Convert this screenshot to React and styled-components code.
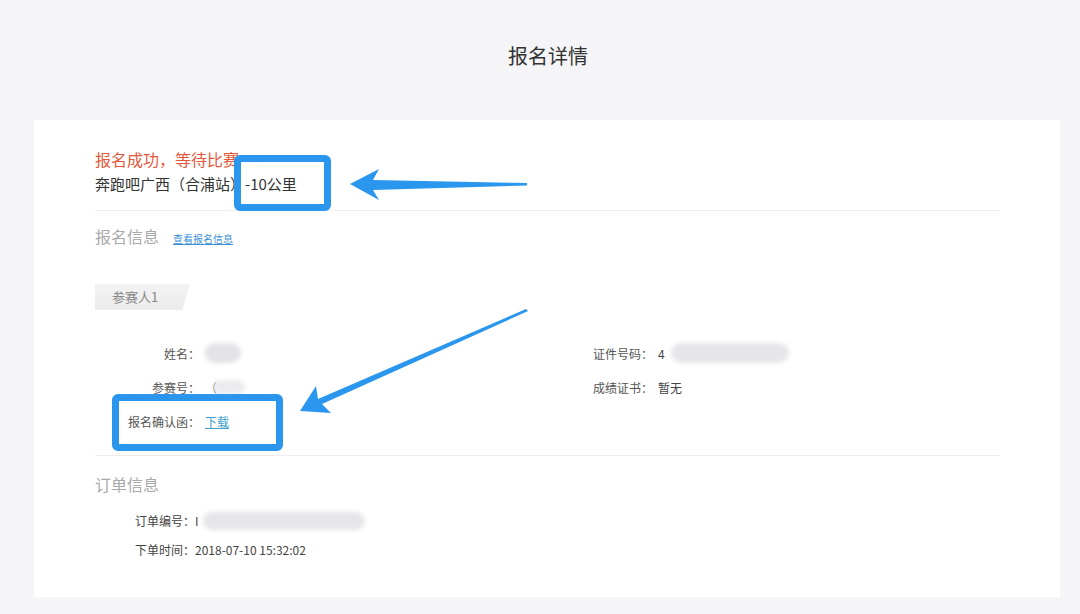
import React from "react";
import styled, { createGlobalStyle } from "styled-components";

const GlobalStyle = createGlobalStyle`
  html, body {
    margin: 0;
    padding: 0;
    background: #f5f5f7;
    font-family: "Noto Sans CJK SC", "Noto Sans", "Liberation Sans", sans-serif;
  }
`;

const PageStyled = styled.div`
  position: relative;
  width: 1080px;
  height: 614px;
  overflow: hidden;
  background: #f5f5f7;
`;

const HeaderStyled = styled.header`
  height: 120px;
  box-sizing: border-box;
  padding-top: 42px;
  text-align: center;
  font-size: 20px;
  line-height: 28px;
  color: #333;
  padding-left: 16px;
`;

const CardStyled = styled.section`
  margin-left: 34px;
  width: 1026px;
  box-sizing: border-box;
  padding: 28px 60px 33px 61px;
  background: #fff;
`;

const StatusStyled = styled.div`
  font-size: 16px;
  line-height: 22px;
  color: #e5573a;
`;

const CourseStyled = styled.div`
  margin-top: 3px;
  font-size: 15px;
  line-height: 22px;
  color: #333;
`;

const DividerStyled = styled.hr`
  border: 0;
  height: 0;
  margin: ${({ $top }) => $top}px 0 0 0;
  border-bottom: 1px solid #eeeeee;
`;

const SectionTitleStyled = styled.div`
  display: flex;
  align-items: baseline;
  gap: 14px;
  margin-top: ${({ $top }) => $top}px;
  font-size: 16px;
  line-height: 22px;
  color: #aaa;
`;

const SmallLinkStyled = styled.a`
  font-size: 10px;
  color: #3d8fd6;
  text-decoration: underline;
  cursor: pointer;
`;

const TagStyled = styled.div`
  margin-top: 34px;
  width: 95px;
  height: 26px;
  box-sizing: border-box;
  padding-left: 17px;
  font-size: 13px;
  line-height: 26px;
  color: #888;
  background: linear-gradient(#f3f3f3, #ececec);
  clip-path: polygon(0 0, 100% 0, 92% 100%, 0 100%);
`;

const FieldGridStyled = styled.div`
  display: grid;
  grid-template-columns: 498px 1fr;
  grid-auto-rows: 34px;
  margin-top: 26px;
`;

const FieldStyled = styled.div`
  display: flex;
  align-items: center;
  font-size: 12px;
  color: #555;
`;

const LabelStyled = styled.span`
  width: ${({ $w }) => $w}px;
  text-align: ${({ $align }) => $align || "right"};
  flex-shrink: 0;
`;

const ValueStyled = styled.span`
  display: flex;
  align-items: center;
  margin-left: ${({ $gap }) => $gap || 5}px;
  color: #444;
`;

const BlurStyled = styled.span`
  display: inline-block;
  width: ${({ $w }) => $w}px;
  height: ${({ $h }) => $h}px;
  margin-left: ${({ $ml }) => $ml || 0}px;
  border-radius: ${({ $h }) => $h / 2}px;
  background: ${({ $c }) => $c || "#e6e6e9"};
  filter: blur(2px);
`;

const LinkStyled = styled.a`
  color: #3f9fcb;
  text-decoration: underline;
  cursor: pointer;
`;

const OrderListStyled = styled.div`
  margin-top: 11px;
  padding-left: 40px;
  display: grid;
  grid-auto-rows: 29px;
`;

const OrderRowStyled = styled.div`
  display: flex;
  align-items: center;
  font-size: 12px;
  color: #444;
`;

const OverlayStyled = styled.svg`
  position: absolute;
  left: 0;
  top: 0;
  pointer-events: none;
`;

const AnnotationBoxStyled = styled.div`
  position: absolute;
  left: ${({ $x }) => $x}px;
  top: ${({ $y }) => $y}px;
  width: ${({ $w }) => $w}px;
  height: ${({ $h }) => $h}px;
  box-sizing: border-box;
  border: 7px solid #2a96ee;
  border-radius: 6px;
  pointer-events: none;
`;

const Field = ({ label, width, align, gap, children }) => (
  <FieldStyled>
    <LabelStyled $w={width} $align={align}>{label}</LabelStyled>
    <ValueStyled $gap={gap}>{children}</ValueStyled>
  </FieldStyled>
);

const App = () => (
  <PageStyled>
    <GlobalStyle />
    <HeaderStyled>报名详情</HeaderStyled>

    <CardStyled>
      <StatusStyled>报名成功，等待比赛</StatusStyled>
      <CourseStyled>奔跑吧广西（合浦站）-10公里</CourseStyled>

      <DividerStyled $top={15} />

      <SectionTitleStyled $top={14}>
        报名信息
        <SmallLinkStyled>查看报名信息</SmallLinkStyled>
      </SectionTitleStyled>

      <TagStyled>参赛人1</TagStyled>

      <FieldGridStyled>
        <Field label="姓名：" width={105}>
          <BlurStyled $w={36} $h={20} $c="#e3e3e6" />
        </Field>
        <Field label="证件号码：" width={60} align="left">
          4<BlurStyled $w={118} $h={20} $ml={6} />
        </Field>
        <Field label="参赛号：" width={105}>
          （<BlurStyled $w={32} $h={14} $ml={-4} $c="#ececef" />
        </Field>
        <Field label="成绩证书：" width={60} align="left">
          暂无
        </Field>
        <Field label="报名确认函：" width={105}>
          <LinkStyled>下载</LinkStyled>
        </Field>
      </FieldGridStyled>

      <DividerStyled $top={17} />

      <SectionTitleStyled $top={17}>订单信息</SectionTitleStyled>

      <OrderListStyled>
        <OrderRowStyled>
          订单编号：I<BlurStyled $w={162} $h={18} $ml={4} />
        </OrderRowStyled>
        <OrderRowStyled>下单时间：2018-07-10 15:32:02</OrderRowStyled>
      </OrderListStyled>
    </CardStyled>

    <AnnotationBoxStyled $x={234} $y={155} $w={97} $h={56} />
    <AnnotationBoxStyled $x={112} $y={394} $w={171} $h={57} />

    <OverlayStyled width="1080" height="614" viewBox="0 0 1080 614">
      <polygon
        fill="#2a96ee"
        points="350,184 379,169 373,180 527,183 527,185.5 373,190 379,200"
      />
      <polygon
        fill="#2a96ee"
        points="300,411 316,386 318,399 526,309 528,311 322,404 331,413"
      />
    </OverlayStyled>
  </PageStyled>
);

export default App;
